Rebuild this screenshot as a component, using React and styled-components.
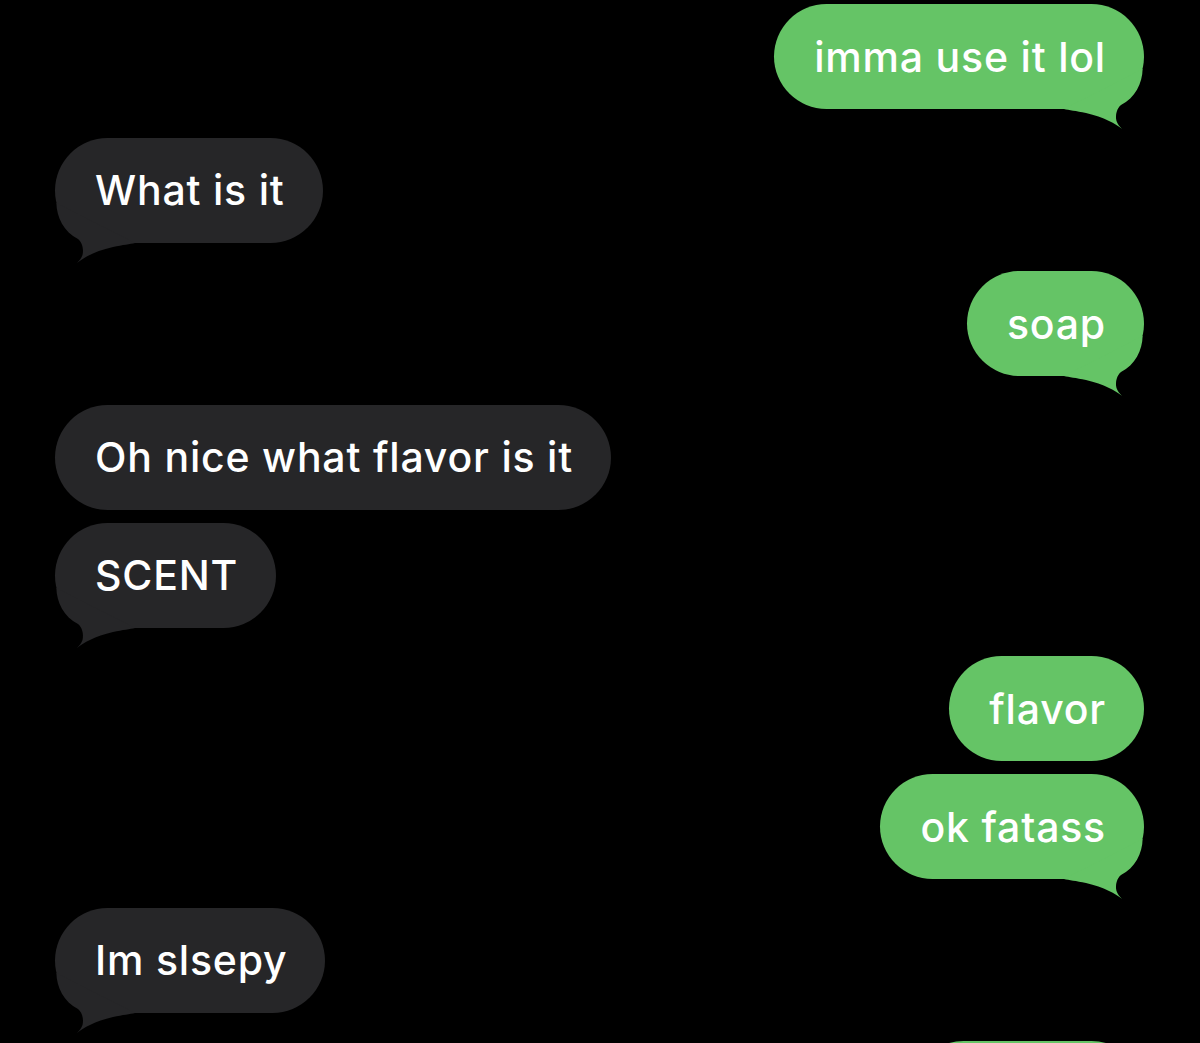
import styled, { createGlobalStyle } from "styled-components";

const messages = [
  { id: 1, from: "me", text: "imma use it lol", tail: true },
  { id: 2, from: "them", text: "What is it", tail: true },
  { id: 3, from: "me", text: "soap", tail: true },
  { id: 4, from: "them", text: "Oh nice what flavor is it", tail: false },
  { id: 5, from: "them", text: "SCENT", tail: true },
  { id: 6, from: "me", text: "flavor", tail: false },
  { id: 7, from: "me", text: "ok fatass", tail: true },
  { id: 8, from: "them", text: "Im slsepy", tail: true },
  { id: 9, from: "me", text: "", tail: false, width: 233 },
];

const GlobalStyle = createGlobalStyle`
  html, body {
    margin: 0;
    padding: 0;
    background: #000;
  }
  body {
    font-family: Inter, "Noto Sans", sans-serif;
    overflow: hidden;
  }
`;

// tail drawn for the right-hand (sent) side, mirrored for received
const Tail = ({ mine }) => (
  <TailSvg $mine={mine} width="80" height="62" viewBox="0 0 80 62">
    <path
      d="M78.6 0 C78.5 14 71 29 57 36 C53 39 51 46 52.5 52 C53.5 55 56 58 58 60 C52 55 40 48 22 44 C12 42 5 41 0 40 Z"
      fill="currentColor"
    />
  </TailSvg>
);

const App = () => {
  return (
    <Thread>
      <GlobalStyle />
      {messages.map((m, i) => {
        const prev = messages[i - 1];
        const mine = m.from === "me";
        const grouped = prev && prev.from === m.from;
        return (
          <Row key={m.id} $mine={mine} $grouped={grouped} $first={i === 0}>
            <Bubble $mine={mine} style={m.width ? { width: m.width } : undefined}>
              <Text>{m.text}</Text>
              {m.tail && <Tail mine={mine} />}
            </Bubble>
          </Row>
        );
      })}
    </Thread>
  );
};

const Thread = styled.div`
  display: flex;
  flex-direction: column;
  padding: 4px 56px 0 55px;
  background: #000;
  height: 1043px;
  box-sizing: border-box;
  overflow: hidden;
`;

const Row = styled.div`
  display: flex;
  flex-shrink: 0;
  justify-content: ${(p) => (p.$mine ? "flex-end" : "flex-start")};
  margin-top: ${(p) => (p.$first ? "0" : p.$grouped ? "13px" : "28.5px")};
`;

const Bubble = styled.div`
  position: relative;
  box-sizing: border-box;
  display: flex;
  align-items: center;
  height: 105px;
  padding: 0 38px 0 40px;
  border-radius: 53px;
  background: ${(p) => (p.$mine ? "#65c466" : "#262628")};
  color: #fff;
  font-size: 41px;
  font-weight: 500;
  letter-spacing: 0.8px;
  white-space: nowrap;
`;

const Text = styled.span`
  position: relative;
  z-index: 1;
`;

const TailSvg = styled.svg`
  position: absolute;
  bottom: -22px;
  color: ${(p) => (p.$mine ? "#65c466" : "#262628")};
  ${(p) => (p.$mine ? "right: 0;" : "left: 0; transform: scaleX(-1);")}
`;

export default App;
